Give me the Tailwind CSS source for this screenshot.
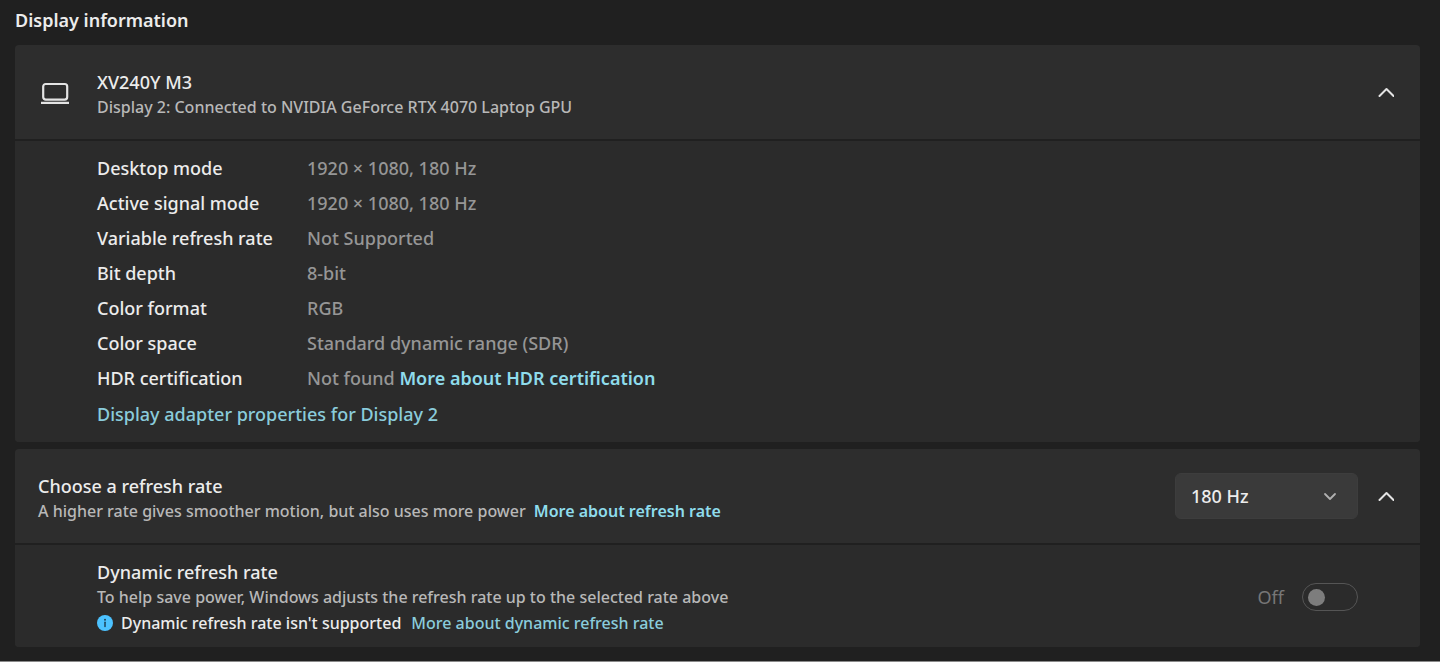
<!DOCTYPE html>
<html lang="en">
<head>
<meta charset="utf-8">
<meta name="viewport" content="width=device-width, initial-scale=1">
<title>Display information</title>
<script src="https://cdn.jsdelivr.net/npm/@tailwindcss/browser@4"></script>
</head>
<body class="flex min-h-screen flex-col border-b border-[#8a8a8a] bg-[#202020] pr-5 pl-[15px] font-['Noto_Sans','Open_Sans',sans-serif] text-[18px] font-medium text-[#ececec]">
<main>
  <h1 class="mb-[5px] leading-10 font-semibold">Display information</h1>

  <section class="mb-[7px] overflow-hidden rounded bg-[#2d2d2d]">
    <header class="flex items-center border-b-2 border-[#202020] pr-[26px] pl-6">
      <svg class="mr-[26px] w-8 shrink-0" viewBox="0 0 32 32" fill="none" stroke="#e4e4e4" stroke-width="2.2" aria-hidden="true">
        <rect x="4.2" y="8" width="24" height="15.6" rx="2.5"/>
        <path d="M2 26.8h28"/>
      </svg>
      <div class="flex-1 pt-6 pb-5">
        <h2 class="leading-[26px]">XV240Y M3</h2>
        <p class="text-[16px] leading-6 text-[#b8b8b8]">Display 2: Connected to NVIDIA GeForce RTX 4070 Laptop GPU</p>
      </div>
      <button type="button" aria-label="Collapse display details" aria-expanded="true">
        <svg class="w-4" viewBox="0 0 16 16" fill="none" stroke="#e4e4e4" stroke-width="2" stroke-linecap="round" stroke-linejoin="round"><path d="m1.5 12 7-7 7 7"/></svg>
      </button>
    </header>
    <div class="bg-[#2b2b2b] pt-[10px] pb-[10px] pl-[82px]">
      <dl class="grid grid-cols-[210px_1fr] leading-[35px] [&>dd]:text-[#969696]">
        <dt>Desktop mode</dt><dd>1920 × 1080, 180 Hz</dd>
        <dt>Active signal mode</dt><dd>1920 × 1080, 180 Hz</dd>
        <dt>Variable refresh rate</dt><dd>Not Supported</dd>
        <dt>Bit depth</dt><dd>8-bit</dd>
        <dt>Color format</dt><dd>RGB</dd>
        <dt>Color space</dt><dd>Standard dynamic range (SDR)</dd>
        <dt>HDR certification</dt><dd>Not found <a href="#" class="font-semibold text-[#8fdcec]">More about HDR certification</a></dd>
      </dl>
      <a href="#" class="block w-fit leading-9 text-[#8accdb]">Display adapter properties for Display 2</a>
    </div>
  </section>

  <section class="overflow-hidden rounded bg-[#2d2d2d]">
    <header class="flex items-center gap-5 border-b-2 border-[#202020] pr-[26px] pl-[23px]">
      <div class="flex-1 pt-6 pb-5">
        <h2 class="leading-[26px]"><label for="rate">Choose a refresh rate</label></h2>
        <p class="text-[16px] leading-6 text-[#b8b8b8]">A higher rate gives smoother motion, but also uses more power <a href="#" class="ml-1 font-semibold text-[#8fdcec]">More about refresh rate</a></p>
      </div>
      <div class="grid items-center">
        <select id="rate" class="col-start-1 row-start-1 h-[46px] w-[183px] appearance-none rounded-md border border-[#3d3d3d] bg-[#3a3a3a] px-[15px]">
          <option>180 Hz</option>
        </select>
        <svg class="pointer-events-none col-start-1 row-start-1 mr-[21px] w-[14px] justify-self-end" viewBox="0 0 14 14" fill="none" stroke="#b0b0b0" stroke-width="1.8" stroke-linecap="round" stroke-linejoin="round" aria-hidden="true"><path d="m2 5 5 5 5-5"/></svg>
      </div>
      <button type="button" aria-label="Collapse refresh rate" aria-expanded="true">
        <svg class="w-4" viewBox="0 0 16 16" fill="none" stroke="#e4e4e4" stroke-width="2" stroke-linecap="round" stroke-linejoin="round"><path d="m1.5 12 7-7 7 7"/></svg>
      </button>
    </header>
    <div class="flex items-center bg-[#2b2b2b] pr-[62px] pl-[82px]">
      <div class="flex-1 pt-[14px] pb-[10px]">
        <h3 class="leading-[26px]">Dynamic refresh rate</h3>
        <p class="text-[16px] leading-6 text-[#b8b8b8]">To help save power, Windows adjusts the refresh rate up to the selected rate above</p>
        <p class="flex items-center text-[16px] leading-7">
          <svg class="mr-2 w-4" viewBox="0 0 16 16" aria-hidden="true"><circle cx="8" cy="8" r="8" fill="#4cc2ff"/><circle cx="8" cy="4.8" r="1" fill="#1d4258"/><path d="M8 7.2v4.2" stroke="#1d4258" stroke-width="1.5" stroke-linecap="round"/></svg>
          Dynamic refresh rate isn't supported
          <a href="#" class="ml-[10px] text-[#8accdb]">More about dynamic refresh rate</a>
        </p>
      </div>
      <label class="flex items-center gap-[18px] pt-[2px] font-normal text-[#777]">
        Off
        <input type="checkbox" role="switch" disabled aria-label="Dynamic refresh rate" class="flex h-7 w-14 appearance-none items-center rounded-full border border-[#555] pl-[5px] before:size-[17px] before:rounded-full before:bg-[#7d7d7d] before:content-['']">
      </label>
    </div>
  </section>
</main>
</body>
</html>
